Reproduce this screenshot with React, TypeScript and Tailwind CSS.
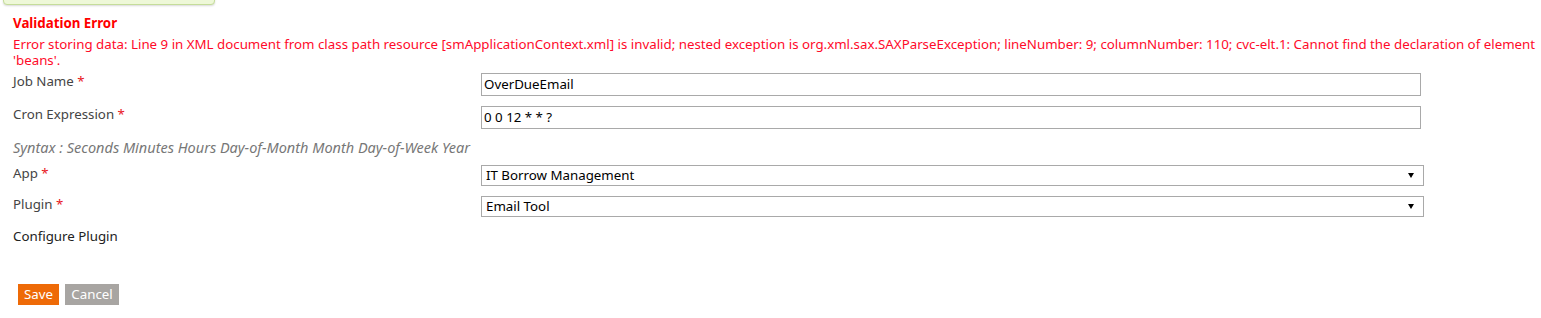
import React from 'react'

const font = { fontFamily: '"Noto Sans", "Open Sans", Arial, sans-serif' }

function Label({ text, required }: { text: string; required?: boolean }) {
    return (
        <div className="text-[13.3px] text-[#444] leading-[16px]">
            {text}
            {required && <span className="text-[#e8141c]"> *</span>}
        </div>
    )
}

function SelectBox({ value }: { value: string }) {
    return (
        <div className="h-[21px] w-[943px] border border-[#a9a9a9] bg-white flex items-center justify-between pl-[4px] pr-[9px] text-[13.3px] text-black">
            <span>{value}</span>
            <svg width="6" height="5" viewBox="0 0 6 5">
                <path d="M0 0 H6 L3 5 Z" fill="#000" />
            </svg>
        </div>
    )
}

export default function App() {
    return (
        <div className="relative w-[1541px] h-[318px] bg-white overflow-hidden" style={font}>
            {/* message box peeking from top */}
            <div className="absolute left-[3px] top-[-20px] w-[212px] h-[25px] rounded-b-[4px] border border-[#c5dd9a] bg-[#eef8d8] shadow-[0_1px_2px_rgba(0,0,0,0.15)]" />

            <div className="pl-[13px] pt-[15px]">
                <div className="text-[13.3px] font-bold text-[#ff0000] leading-[16px]">Validation Error</div>
                <div className="mt-[5px] text-[13.3px] text-[#ff0a2a] leading-[16px]">
                    Error storing data: Line 9 in XML document from class path resource [smApplicationContext.xml] is invalid; nested exception is org.xml.sax.SAXParseException; lineNumber: 9; columnNumber: 110; cvc-elt.1: Cannot find the declaration of element 'beans'.
                </div>

                <div className="grid grid-cols-[468px_1fr] mt-[4px]">
                    {/* Job Name */}
                    <div className="pt-[1px]"><Label text="Job Name" required /></div>
                    <div className="h-[33px] pt-[1px]">
                        <div className="h-[23px] w-[940px] border border-[#a9a9a9] flex items-center pl-[2px] text-[13.3px] text-black">OverDueEmail</div>
                    </div>

                    {/* Cron */}
                    <div className="pt-[1px]"><Label text="Cron Expression" required /></div>
                    <div className="h-[32px] pt-[1px]">
                        <div className="h-[23px] w-[940px] border border-[#a9a9a9] flex items-center pl-[2px] text-[13.3px] text-black">0 0 12 * * ?</div>
                    </div>
                </div>

                <div className="text-[14.5px] italic text-[#777] leading-[16px] mt-[2px]">
                    Syntax : Seconds Minutes Hours Day-of-Month Month Day-of-Week Year
                </div>

                <div className="grid grid-cols-[468px_1fr] mt-[10px]">
                    <div><Label text="App" required /></div>
                    <div className="h-[31px]"><SelectBox value="IT Borrow Management" /></div>

                    <div><Label text="Plugin" required /></div>
                    <div className="h-[31px]"><SelectBox value="Email Tool" /></div>
                </div>

                <div className="text-[13.3px] text-[#222] leading-[16px] mt-[1px]">Configure Plugin</div>

                <div className="flex gap-[6px] mt-[40px] ml-[5px]">
                    <button className="h-[21px] w-[41px] bg-[#ee6a07] text-white text-[13.3px] leading-[21px]">Save</button>
                    <button className="h-[21px] w-[54px] bg-[#a8a5a2] text-white text-[13.3px] leading-[21px]">Cancel</button>
                </div>
            </div>
        </div>
    )
}
